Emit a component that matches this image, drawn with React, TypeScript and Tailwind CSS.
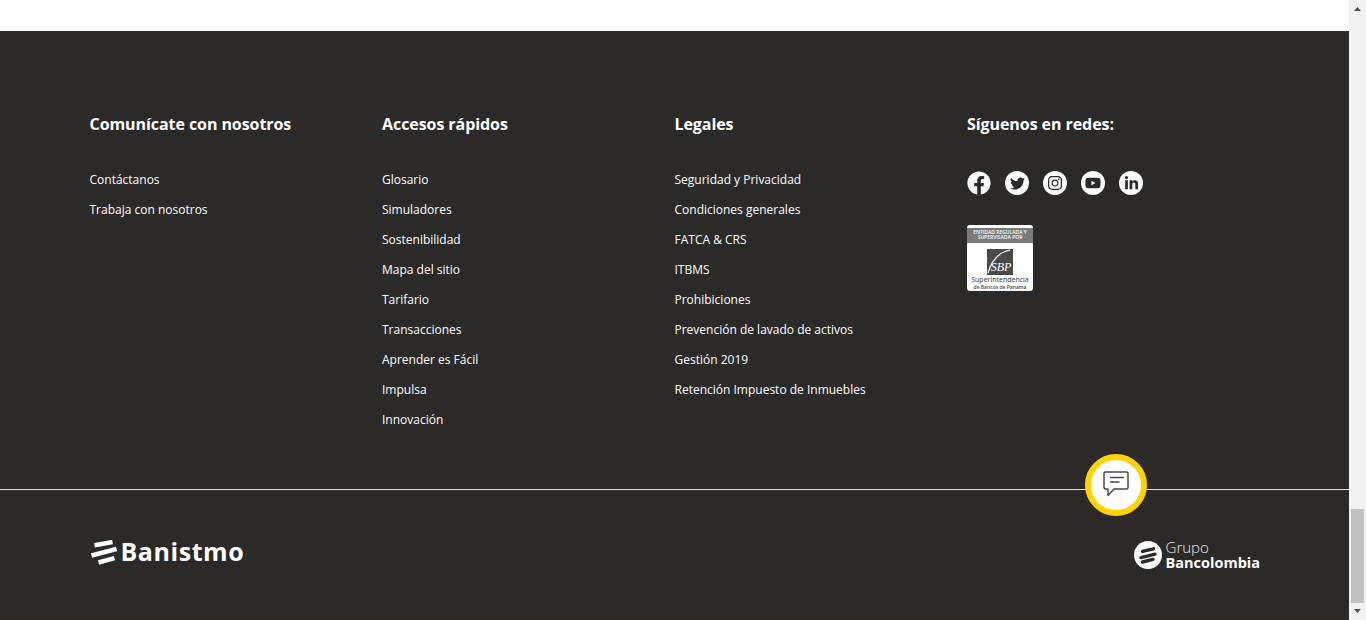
import { FaFacebook, FaTwitter, FaInstagram, FaYoutube, FaLinkedinIn } from "react-icons/fa";

const font = "font-['Open_Sans',sans-serif]";

const columns = [
  {
    title: "Comunícate con nosotros",
    links: ["Contáctanos", "Trabaja con nosotros"],
  },
  {
    title: "Accesos rápidos",
    links: [
      "Glosario",
      "Simuladores",
      "Sostenibilidad",
      "Mapa del sitio",
      "Tarifario",
      "Transacciones",
      "Aprender es Fácil",
      "Impulsa",
      "Innovación",
    ],
  },
  {
    title: "Legales",
    links: [
      "Seguridad y Privacidad",
      "Condiciones generales",
      "FATCA & CRS",
      "ITBMS",
      "Prohibiciones",
      "Prevención de lavado de activos",
      "Gestión 2019",
      "Retención Impuesto de Inmuebles",
    ],
  },
];

function BanistmoMark() {
  return (
    <svg viewBox="0 0 26 26" className="size-[26px]" fill="none" stroke="#fff" strokeWidth="4.6">
      <path d="M3.5 5.3 21.5 2.1" />
      <path d="M0.5 15.5 25.5 9.1" />
      <path d="M7.5 22.5 23.5 18.1" />
    </svg>
  );
}

function GrupoMark() {
  return (
    <svg viewBox="0 0 28 28" className="size-[28px]">
      <circle cx="14" cy="14" r="14" fill="#fff" />
      <g fill="none" stroke="#2c2a29" strokeWidth="3.4" strokeLinecap="round">
        <path d="M8.5 10.4 19.5 7.8" />
        <path d="M7 16.6 21 13.2" />
        <path d="M8.5 21 19 18.4" />
      </g>
    </svg>
  );
}

function SocialIcons() {
  return (
    <div className="flex gap-[14px] text-[#2c2a29]">
      <FaFacebook className="size-6 text-white" />
      <span className="size-6 rounded-full bg-white flex items-center justify-center">
        <FaTwitter className="size-[15px]" />
      </span>
      <span className="size-6 rounded-full bg-white flex items-center justify-center">
        <FaInstagram className="size-4" />
      </span>
      <span className="size-6 rounded-full bg-white flex items-center justify-center">
        <FaYoutube className="size-4" />
      </span>
      <span className="size-6 rounded-full bg-white flex items-center justify-center">
        <FaLinkedinIn className="size-[15px]" />
      </span>
    </div>
  );
}

function SbpBadge() {
  return (
    <div className="mt-[30px] w-[66px] h-[66px] pt-[3px] rounded-[3px] bg-white overflow-hidden flex flex-col items-center">
      <div className="w-full h-[15px] pt-[1.5px] bg-[#7a7a7a] text-white text-[5px] leading-[5.5px] font-semibold text-center whitespace-nowrap">
        ENTIDAD REGULADA Y
        <br />
        SUPERVISADA POR
      </div>
      <div className="mt-[6px] w-[26px] h-[26px] bg-[#4a4a4a] relative overflow-hidden flex items-end justify-center">
        <svg viewBox="0 0 26 26" className="absolute inset-0 size-full" fill="none">
          <path d="M23 1C13 3 5 10 1 24" stroke="#fff" strokeWidth="1.2" />
        </svg>
        <span className="relative left-[1px] text-white text-[12px] leading-[15px] italic font-['Liberation_Serif',serif]">SBP</span>
      </div>
      <div className="mt-[1px] text-[7px] leading-[8px] text-[#333] whitespace-nowrap">Superintendencia</div>
      <div className="text-[5px] leading-[6px] font-semibold text-[#444] whitespace-nowrap">de Bancos de Panamá</div>
    </div>
  );
}

export default function App() {
  return (
    <div className={`${font} flex h-[620px] w-[1366px] overflow-hidden bg-white`}>
      <div className="w-[1349px] relative">
        <div className="h-[31px] bg-white" />
        <footer className="h-[589px] bg-[#2c2a29] text-white">
          <div className="h-[458px] border-b border-[#e6e6e6] box-content pl-[89.5px] flex">
            <div className="flex w-[877.5px] pt-[80px]">
              {columns.map((col) => (
                <div key={col.title} className="w-[292.5px]">
                  <h3 className="text-[16px] leading-[26px] font-bold whitespace-nowrap tracking-[-0.07px]">{col.title}</h3>
                  <ul className="mt-[28px] flex flex-col">
                    {col.links.map((link) => (
                      <li key={link} className="h-[30px] text-[12px] leading-[29px] whitespace-nowrap">
                        {link}
                      </li>
                    ))}
                  </ul>
                </div>
              ))}
            </div>
            <div className="pt-[80px]">
              <h3 className="text-[16px] leading-[26px] font-bold whitespace-nowrap tracking-[-0.07px]">Síguenos en redes:</h3>
              <div className="mt-[34px]">
                <SocialIcons />
              </div>
              <SbpBadge />
            </div>
          </div>
          <div className="flex items-start justify-between pl-[91px] pr-[89px] pt-[50px]">
            <div className="flex items-start gap-[3.5px]">
              <BanistmoMark />
              <span className="text-[25px] leading-[22px] font-bold tracking-[0.55px]">Banistmo</span>
            </div>
            <div className="flex items-center gap-[4px]">
              <GrupoMark />
              <div className="flex flex-col">
                <span className="text-[15px] leading-[15px] font-light text-[#e8e8e8]">Grupo</span>
                <span className="text-[14.5px] leading-[15px] font-bold">Bancolombia</span>
              </div>
            </div>
          </div>
        </footer>
        <button className="absolute left-[1085px] top-[454px] size-[62px] rounded-full bg-white border-[6px] border-[#ffd200] flex items-center justify-center">
          <svg viewBox="0 0 26 26" className="size-[26px] relative top-[-1px]" fill="none" stroke="#4a4a4a" strokeWidth="1.5" strokeLinejoin="round">
            <path d="M2.5 1h21a1.5 1.5 0 0 1 1.5 1.5v14a1.5 1.5 0 0 1-1.5 1.5H11l-6 6.5V18H2.5A1.5 1.5 0 0 1 1 16.5v-14A1.5 1.5 0 0 1 2.5 1Z" />
            <path d="M7 6.5h14M7 11h9.5" />
          </svg>
        </button>
      </div>
      <div className="w-[17px] h-full bg-[#f1f1f1] flex flex-col items-center justify-between">
        <svg viewBox="0 0 17 17" className="size-[17px] shrink-0" fill="#505050">
          <path d="M8.5 7 5 11h7Z" />
        </svg>
        <div className="w-[13px] h-[94px] mt-auto bg-[#c1c1c1]" />
        <svg viewBox="0 0 17 17" className="size-[17px] shrink-0" fill="#505050">
          <path d="M8.5 10 5 6h7Z" />
        </svg>
      </div>
    </div>
  );
}
